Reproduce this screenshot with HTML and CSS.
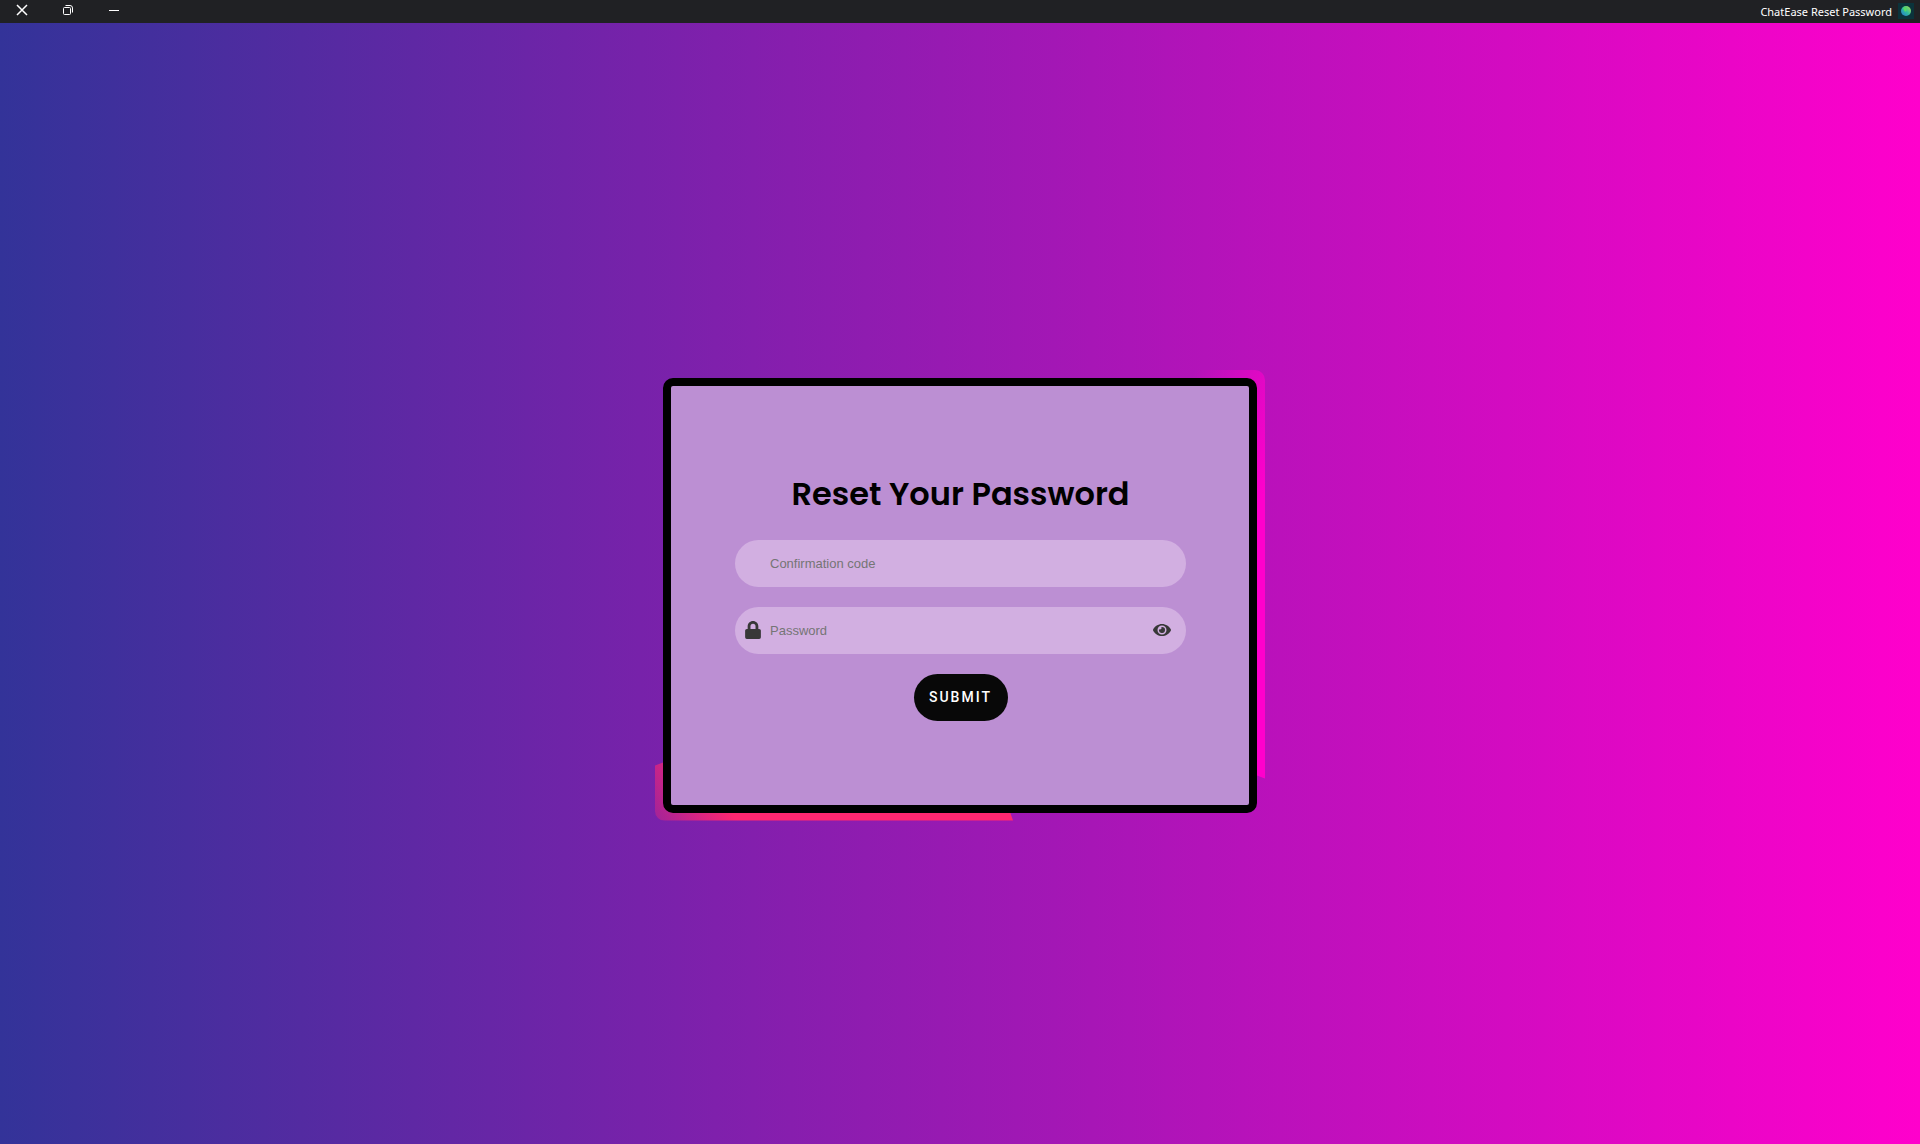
FILE: index.html
```html
<!DOCTYPE html>
<html lang="en">
<head>
<meta charset="utf-8">
<title>ChatEase Reset Password</title>
<link rel="stylesheet" href="styles.css">
</head>
<body>
<header class="titlebar">
  <div class="window-controls">
    <button class="window-button" type="button" aria-label="Close"><svg class="close-icon" width="12" height="12" viewBox="0 0 12 12"><path d="M1 1l10 10M11 1L1 11"/></svg></button>
    <button class="window-button" type="button" aria-label="Restore"><svg width="12" height="12" viewBox="0 0 12 12"><rect x="1.5" y="3.5" width="7" height="7" rx="1"/><path d="M3.5 1.5H8a2.500 2.500 0 0 1 2.500 2.500V8.500"/></svg></button>
    <button class="window-button" type="button" aria-label="Minimize"><svg width="12" height="12" viewBox="0 0 12 12"><path d="M1 6.500h10"/></svg></button>
  </div>
  <div class="window-title">
    <span>ChatEase Reset Password</span>
    <svg class="app-icon" width="16" height="16" viewBox="0 0 16 16">
      <defs><linearGradient id="globe" x1="0" y1="1" x2="1" y2="0"><stop offset="0" stop-color="#2473d8"/><stop offset=".5" stop-color="#31bd9b"/><stop offset="1" stop-color="#b4e044"/></linearGradient></defs>
      <rect width="16" height="16" fill="#0b333b"/><circle cx="8" cy="8" r="5" fill="url(#globe)"/><path d="M5 5l3-1 1 3-2 2z" fill="#54dc62"/>
    </svg>
  </div>
</header>
<main class="page">
  <section class="glow-frame">
    <form class="card">
      <h1 class="heading">Reset Your Password</h1>
      <div class="field">
        <input class="field-input" type="text" placeholder="Confirmation code" aria-label="Confirmation code">
      </div>
      <div class="field">
        <svg class="lock-icon" width="16" height="18" viewBox="0 0 448 512"><path d="M400 224h-24v-72C376 68.200 307.800 0 224 0S72 68.200 72 152v72H48a48 48 0 0 0-48 48v192a48 48 0 0 0 48 48h352a48 48 0 0 0 48-48V272a48 48 0 0 0-48-48zm-104 0H152v-72a72 72 0 0 1 144 0z"/></svg>
        <input class="field-input" type="password" placeholder="Password" aria-label="Password">
        <button class="reveal" type="button" aria-label="Show password"><svg width="18" height="16" viewBox="0 0 576 512"><path d="M572.520 241.400C518.290 135.590 410.930 64 288 64S57.680 135.640 3.480 241.410a32.350 32.350 0 0 0 0 29.190C57.710 376.410 165.070 448 288 448s230.320-71.640 284.520-177.410a32.350 32.350 0 0 0 0-29.190zM288 400a144 144 0 1 1 144-144 143.930 143.930 0 0 1-144 144zm0-240a95.310 95.310 0 0 0-25.310 3.790 47.850 47.850 0 0 1-66.900 66.900A95.780 95.780 0 1 0 288 160z"/></svg></button>
      </div>
      <button class="submit" type="submit">SUBMIT</button>
    </form>
  </section>
</main>
</body>
</html>
```
FILE: styles.css
```css
* {
  box-sizing: border-box;
}

body {
  margin: 0;
  min-height: 100vh;
  display: flex;
  flex-direction: column;
  background: linear-gradient(to right, #333399, #ff00cc);
  font-family: "Liberation Sans", Arial, sans-serif;
}

button {
  border: 0;
  padding: 0;
  background: none;
  cursor: pointer;
}

.titlebar {
  display: flex;
  justify-content: space-between;
  height: 23px;
  padding: 3px 6px 0 16px;
  background: #202124;
  color: #fff;
}

.window-controls {
  display: flex;
  gap: 34px;
}

.window-button {
  display: flex;
  align-items: center;
  width: 12px;
  height: 14px;
}

.window-button svg {
  fill: none;
  stroke: #fff;
}

.window-button .close-icon {
  stroke-width: 1.5;
}

.window-title {
  display: flex;
  gap: 6px;
  font: 11px/18px "Noto Sans", sans-serif;
}

.page {
  flex: 1;
  display: flex;
  justify-content: center;
  align-items: center;
  padding: 47px 0 24px;
}

.glow-frame {
  position: relative;
  width: 610px;
  max-width: 100%;
  padding: 8px;
  border-radius: 10px;
  overflow: hidden;
}

.glow-frame::before,
.glow-frame::after {
  content: "";
  position: absolute;
  inset: 0;
}

.glow-frame::before {
  background: linear-gradient(113deg, #ff00cc00 497px, #ff00cc 609px);
  clip-path: polygon(50% 0, 100% 0, 100% 409px, 50% 296px);
}

.glow-frame::after {
  background: linear-gradient(60deg, #ff277000 -31px, #ff2770 71px);
  clip-path: polygon(0 396px, 300px 285px, 358px 100%, 0 100%);
}

.card {
  position: relative;
  z-index: 1;
  display: flex;
  flex-direction: column;
  align-items: center;
  gap: 20px;
  padding: 84px 63px 84px 64px;
  border: 8px solid #000;
  border-radius: 10px;
  background: #bc8fd3;
}

.heading {
  margin: 0 0 2px;
  font: 600 32px/48px Poppins, "Open Sans", sans-serif;
  color: #000;
}

.field {
  display: flex;
  align-items: center;
  position: relative;
  width: 100%;
  height: 47px;
}

.field-input {
  width: 100%;
  height: 100%;
  padding: 0 45px 0 35px;
  border: 0;
  border-radius: 24px;
  outline: 0;
  background: #d2afe1;
  font: 13px "Liberation Sans", Arial, sans-serif;
}

.field-input::placeholder {
  color: #757575;
}

.lock-icon {
  position: absolute;
  left: 10px;
  fill: #383838;
}

.reveal {
  position: absolute;
  right: 15px;
  display: flex;
  fill: #383838;
}

.submit {
  width: 94px;
  height: 47px;
  border-radius: 24px;
  background: #080808;
  color: #fff;
  font: 500 14px Roboto, sans-serif;
  letter-spacing: 2px;
}
```
